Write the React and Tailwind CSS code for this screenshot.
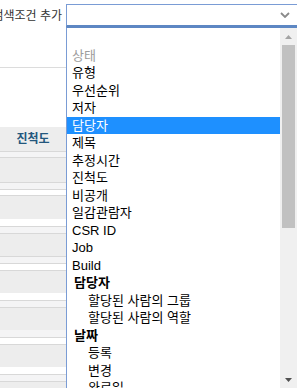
import { useState } from 'react';

// background table rows behind the open dropdown: [kind, height]
const BANDS = [
  ['light', 5], ['line', 1],
  ['gray', 24], ['line', 1], ['light', 6], ['line', 1], ['white', 5], ['line', 1],
  ['gray', 23], ['white', 7], ['line', 1], ['light', 6], ['line', 1],
  ['gray', 22], ['line', 1], ['light', 6], ['line', 1], ['white', 6], ['line', 1],
  ['gray', 22], ['white', 7], ['line', 1], ['light', 6], ['line', 1],
  ['gray', 22], ['light', 7], ['line', 1], ['white', 6], ['line', 1],
  ['gray', 22], ['white', 7], ['line', 1], ['light', 6], ['line', 1],
  ['gray', 20],
];

const BAND_CLASS = {
  gray: 'bg-[#ededed]',
  light: 'bg-[#f4f4f5]',
  white: 'bg-white',
  line: 'bg-[#d8d8d8]',
};

const OPTIONS = [
  { label: '', kind: 'item' },
  { label: '상태', kind: 'disabled' },
  { label: '유형', kind: 'item' },
  { label: '우선순위', kind: 'item' },
  { label: '저자', kind: 'item' },
  { label: '담당자', kind: 'item', id: 'assigned_to' },
  { label: '제목', kind: 'item' },
  { label: '추정시간', kind: 'item' },
  { label: '진척도', kind: 'item' },
  { label: '비공개', kind: 'item' },
  { label: '일감관람자', kind: 'item' },
  { label: 'CSR ID', kind: 'item' },
  { label: 'Job', kind: 'item' },
  { label: 'Build', kind: 'item' },
  { label: '담당자', kind: 'group' },
  { label: '할당된 사람의 그룹', kind: 'sub' },
  { label: '할당된 사람의 역할', kind: 'sub' },
  { label: '날짜', kind: 'group' },
  { label: '등록', kind: 'sub' },
  { label: '변경', kind: 'sub' },
  { label: '완료일', kind: 'sub' },
];

function OptionRow({ option, active }) {
  if (option.kind === 'group') {
    return <div className="h-[17.5px] pl-[7px] leading-[17.5px] font-bold text-black">{option.label}</div>;
  }
  if (option.kind === 'disabled') {
    return <div className="h-[17.5px] pl-[5px] leading-[17.5px] text-[#9c9c9c]">{option.label}</div>;
  }
  const pad = option.kind === 'sub' ? 'pl-[21px]' : 'pl-[5px]';
  return (
    <div
      className={`h-[17.5px] ${pad} leading-[17.5px] whitespace-nowrap ${
        active ? 'bg-[#1e90ff] text-white' : 'text-black'
      }`}
    >
      {option.label}
    </div>
  );
}

export default function App() {
  const [activeIndex] = useState(5);

  return (
    <div className="relative h-[388px] w-[297px] overflow-hidden bg-white font-['Liberation_Sans','Noto_Sans_CJK_KR',sans-serif]">
      {/* page behind the dropdown */}
      <div className="flex flex-col">
        <div className="flex h-[67px] items-start gap-[4px] pt-[4px]">
          <div className="flex h-[23px] w-[62px] shrink-0 items-center justify-end">
            <span className="whitespace-nowrap text-[12px] text-[#333]">검색조건 추가</span>
          </div>
          <div className="flex h-[23px] w-[236px] shrink-0 items-center justify-end border border-b-2 border-[#7a9cd5] border-b-[#5d87c3] bg-white pr-[11px]">
            <svg width="10" height="6" viewBox="0 0 10 6" fill="none">
              <path d="M1 1l4 4 4-4" stroke="#8a8a8a" strokeWidth="1.8" />
            </svg>
          </div>
        </div>
        <div className="h-px bg-[#dcdcdc]" />
        <div className="h-[59px]" />
        <div className="flex h-[24px] w-[66px] items-center justify-center bg-[#ededed]">
          <span className="text-[12px] font-bold text-[#23577d]">진척도</span>
        </div>
        <div className="h-px bg-[#d8d8d8]" />
        {BANDS.map(([kind, h], i) => (
          <div key={i} className={BAND_CLASS[kind]} style={{ height: h }} />
        ))}
      </div>

      {/* open select list */}
      <div className="absolute bottom-0 left-[66px] right-0 top-[27px] flex border-l border-t border-[#7a9cd5] border-t-[#5d87c3] bg-white">
        <div className="flex-1 overflow-hidden pt-px text-[13px]">
          {OPTIONS.map((option, i) => (
            <OptionRow key={i} option={option} active={i === activeIndex} />
          ))}
        </div>
        <div className="flex w-[17px] shrink-0 flex-col bg-[#f0f0f0]">
          <div className="flex h-[17px] items-center justify-center">
            <svg width="7" height="4" viewBox="0 0 7 4">
              <path d="M0 4L3.5 0 7 4z" fill="#a3a3a3" />
            </svg>
          </div>
          <div className="flex-1">
            <div className="mx-[2px] h-[183px] bg-[#c1c1c1]" />
          </div>
          <div className="flex h-[17px] items-center justify-center">
            <svg width="7" height="4" viewBox="0 0 7 4">
              <path d="M0 0L3.5 4 7 0z" fill="#505050" />
            </svg>
          </div>
        </div>
      </div>
    </div>
  );
}
